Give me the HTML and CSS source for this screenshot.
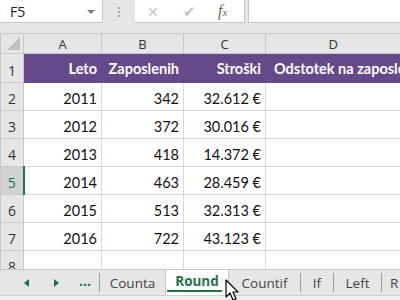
FILE: index.html
```html
<!DOCTYPE html>
<html lang="sl">
<head>
    <meta charset="UTF-8">
    <title>Round</title>
    <link rel="stylesheet" href="styles.css">
</head>
<body>
    <div class="top">
        <div class="formula-bar">
            <div class="name-box">F5<span class="drop"></span></div>
            <div class="dots"><i></i><i></i><i></i></div>
            <div class="actions">
                <span class="cancel">&#x2715;</span>
                <span class="enter">&#x2714;</span>
                <span class="fx">f<small>x</small></span>
            </div>
            <div class="formula-input"></div>
        </div>
    </div>

    <table class="sheet">
        <tr class="col-head">
            <th class="corner"><span class="tri"></span></th>
            <th>A</th><th>B</th><th>C</th><th>D</th>
        </tr>
        <tr class="title-row">
            <th>1</th>
            <td>Leto</td><td>Zaposlenih</td><td>Stroški</td><td class="left">Odstotek na zaposlenega</td>
        </tr>
        <tr><th>2</th><td>2011</td><td>342</td><td>32.612 €</td><td></td></tr>
        <tr><th>3</th><td>2012</td><td>372</td><td>30.016 €</td><td></td></tr>
        <tr><th>4</th><td>2013</td><td>418</td><td>14.372 €</td><td></td></tr>
        <tr><th class="sel">5</th><td>2014</td><td>463</td><td>28.459 €</td><td></td></tr>
        <tr><th>6</th><td>2015</td><td>513</td><td>32.313 €</td><td></td></tr>
        <tr><th>7</th><td>2016</td><td>722</td><td>43.123 €</td><td></td></tr>
        <tr><th>8</th><td></td><td></td><td></td><td></td></tr>
    </table>

    <div class="tabs">
        <div class="nav">
            <span class="arr-left"></span>
            <span class="arr-right"></span>
            <span class="more">...</span>
        </div>
        <div class="tab w-counta">Counta</div>
        <div class="tab active">Round</div>
        <div class="tab w-countif">Countif</div>
        <div class="tab w-if">If</div>
        <div class="tab w-left">Left</div>
        <div class="tab w-r">R</div>
    </div>
    <div class="status"></div>

    <svg class="cursor" width="18" height="24" viewBox="0 0 18 24">
        <path d="M1 1 L1 18 L5 14 L8 21 L11 20 L8 13 L13 13 Z" fill="#fff" stroke="#000" stroke-width="1.2" stroke-linejoin="round"/>
    </svg>
</body>
</html>
```

FILE: styles.css
```css
body { margin: 0; width: 400px; height: 300px; overflow: hidden; position: relative; background: #fff; font-family: "Open Sans", "Liberation Sans", sans-serif; }

.top { background: #e6e6e6; height: 33px; }
.formula-bar { display: flex; height: 24px; }
.name-box { width: 103px; height: 23px; background: #fff; border-right: 1px solid #c6c6c6; border-bottom: 1px solid #c6c6c6; position: relative; font-size: 14px; line-height: 23px; padding-left: 10px; box-sizing: border-box; color: #222; }
.drop { position: absolute; right: 7px; top: 10px; border-left: 4px solid transparent; border-right: 4px solid transparent; border-top: 4px solid #777; }
.dots { width: 32px; display: flex; flex-direction: column; align-items: center; justify-content: center; gap: 2px; }
.dots i { width: 2px; height: 2px; background: #a8a8a8; }
.actions { width: 110px; height: 23px; background: #fff; border-right: 1px solid #c6c6c6; border-bottom: 1px solid #c6c6c6; display: flex; align-items: center; box-sizing: border-box; color: #c4c4c4; font-size: 15px; }
.cancel { margin-left: 12px; font-size: 14px; }
.enter { margin-left: 24px; font-size: 15px; }
.fx { margin-left: 22px; font-family: "Liberation Serif", serif; font-style: italic; color: #666; font-size: 16px; }
.fx small { font-size: 11px; }
.formula-input { flex: 1; margin-left: 3px; height: 23px; background: #fff; border-left: 1px solid #c6c6c6; border-bottom: 1px solid #c6c6c6; box-sizing: border-box; }

.sheet { border-collapse: collapse; table-layout: fixed; width: 400px; font-family: "Lato", "Liberation Sans", sans-serif; font-size: 14.5px; color: #111; }
.sheet th, .sheet td { border: 1px solid #d8d8d8; padding: 0 4px; height: 28px; box-sizing: border-box; overflow: hidden; white-space: nowrap; }
.sheet tr > :last-child { border-right: none; }
.sheet td { text-align: right; vertical-align: bottom; padding-bottom: 3px; }
.sheet th { background: #e6e6e6; border-color: #c8c8c8; font-weight: normal; font-family: "Open Sans", "Liberation Sans", sans-serif; font-size: 14px; color: #333; width: 23px; vertical-align: bottom; padding: 0 0 2px 0; }
.sheet th.sel { background: #d2d2d2; color: #217346; border-right: 2px solid #217346; }
.col-head th { height: 20px; font-size: 13px; vertical-align: middle; padding: 0; width: auto; }
.col-head th:nth-child(2) { width: 78px; }
.col-head th:nth-child(3) { width: 82px; }
.col-head th:nth-child(4) { width: 82px; }
.col-head th:nth-child(5) { width: 135px; }
.col-head th.corner { width: 23px; position: relative; }
.tri { position: absolute; right: 3px; bottom: 3px; border-left: 13px solid transparent; border-bottom: 13px solid #c0c0c0; }
.title-row th { height: 29px; }
.title-row td { background: #66498a; color: #fff; font-weight: bold; border-color: #66498a; padding-bottom: 5px; }
.title-row td.left { text-align: left; padding-left: 8px; padding-right: 0; text-overflow: clip; }

.tabs { position: absolute; left: 0; top: 269px; width: 400px; height: 26px; overflow: hidden; background: #e6e6e6; border-top: 1px solid #c6c6c6; box-sizing: border-box; display: flex; align-items: stretch; font-family: "Open Sans", "Liberation Sans", sans-serif; font-size: 13.5px; color: #444; }
.nav { width: 99px; flex-shrink: 0; display: flex; align-items: center; }
.arr-left { margin-left: 24px; border-top: 4px solid transparent; border-bottom: 4px solid transparent; border-right: 5px solid #217346; }
.arr-right { margin-left: 25px; border-top: 4px solid transparent; border-bottom: 4px solid transparent; border-left: 5px solid #217346; }
.more { margin-left: 20px; color: #217346; font-weight: bold; font-size: 14px; line-height: 1; padding-bottom: 4px; }
.tab { flex-shrink: 0; box-sizing: border-box; display: flex; align-items: center; justify-content: center; border-left: 1px solid #9a9a9a; margin: 3px 0; }
.w-counta { width: 66px; }
.w-countif { width: 71px; }
.w-if { width: 33px; }
.w-left { width: 48px; }
.w-r { width: 19px; justify-content: flex-start; padding-left: 8px; }
.tab.active { width: 64px; margin: -1px 0 0 0; background: #fff; border-left: 1px solid #c6c6c6; border-right: 1px solid #c6c6c6; color: #217346; font-weight: bold; padding: 0 0 2px; position: relative; }
.tab.active::after { content: ""; position: absolute; left: 1px; right: 6px; bottom: 3px; height: 2px; background: #217346; }
.tab.active + .tab { border-left: none; }
.status { position: absolute; left: 0; top: 295px; width: 400px; height: 5px; background: #f0f0f0; border-top: 1px solid #d0d0d0; box-sizing: border-box; }

.cursor { position: absolute; left: 225px; top: 279px; }
```
